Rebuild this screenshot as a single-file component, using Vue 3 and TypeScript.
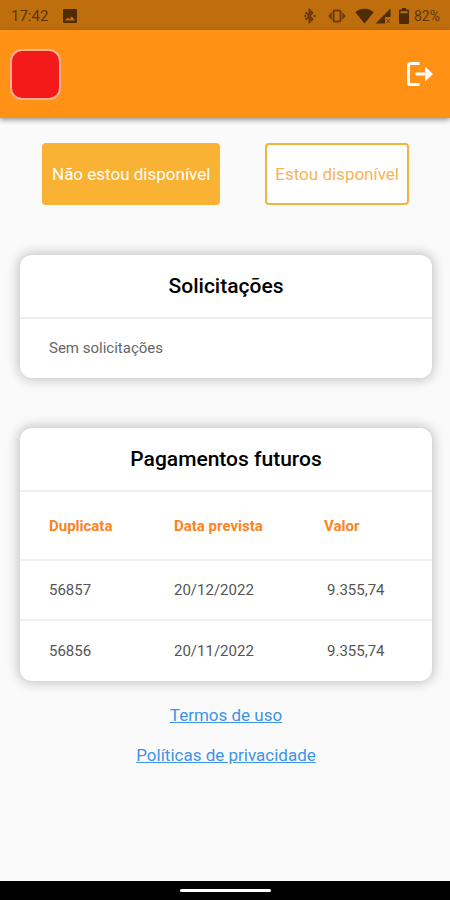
<script setup lang="ts">
import { ref } from 'vue'

interface Payment {
  id: string
  date: string
  value: string
}

const available = ref<boolean>(false)

const payments: Payment[] = [
  { id: '56857', date: '20/12/2022', value: '9.355,74' },
  { id: '56856', date: '20/11/2022', value: '9.355,74' },
]
</script>

<template>
  <div class="screen">
    <div class="status">
      <span class="time">17:42</span>
      <svg class="photo" width="16" height="16" viewBox="0 0 16 16" aria-hidden="true">
        <path fill-rule="evenodd" d="M2 1h12a1 1 0 0 1 1 1v12a1 1 0 0 1-1 1H2a1 1 0 0 1-1-1V2a1 1 0 0 1 1-1zM3 12.500h10L9.800 8.300 7.400 11.300 5.700 9.300z" />
      </svg>
      <div class="indicators">
        <svg class="bluetooth" width="12" height="18" viewBox="0 0 12 18" aria-hidden="true">
          <path class="line" d="M1.500 5.300l7 6.700L5.500 15V3l3 3-7 6.700" />
          <circle cx="1.200" cy="9" r="1" />
          <circle cx="10.600" cy="9" r="1" />
        </svg>
        <svg class="vibrate" width="18" height="16" viewBox="0 0 18 16" aria-hidden="true">
          <rect class="line" x="5.500" y="2.500" width="7" height="11" rx="1.500" />
          <path d="M3.700 4v8L.3 8zM14.300 4v8l3.400-4z" />
        </svg>
        <svg class="wifi" width="19" height="16" viewBox="0 0 19 16" aria-hidden="true">
          <path d="M9.500 15.500L.3 4.200C5.500-.4 13.500-.4 18.700 4.200z" />
        </svg>
        <svg class="signal" width="16" height="16" viewBox="0 0 16 16" aria-hidden="true">
          <path d="M15.500.5V9H10v6.500H.5z" />
          <path class="line thin" d="M11.500 11l3.500 4M15 11l-3.500 4" />
        </svg>
        <svg class="battery" width="10" height="16" viewBox="0 0 10 16" aria-hidden="true">
          <path fill-rule="evenodd" d="M3 0h4v1.500h2a1 1 0 0 1 1 1V15a1 1 0 0 1-1 1H1a1 1 0 0 1-1-1V2.500a1 1 0 0 1 1-1h2zM1.500 3.300v2h7v-2z" />
        </svg>
        <span class="percent">82%</span>
      </div>
    </div>

    <header class="topbar">
      <button class="avatar" type="button" aria-label="Perfil"></button>
      <button class="logout" type="button" aria-label="Sair">
        <svg width="28" height="26" viewBox="0 0 28 26" aria-hidden="true">
          <path d="M13.500 2.500H4.500a2 2 0 0 0-2 2v17a2 2 0 0 0 2 2h9" />
          <path d="M9.500 13H24" />
          <path class="head" d="M19 5.500L27 13l-8 7.500v-4.500l2-3-2-3z" />
        </svg>
      </button>
    </header>

    <main class="content">
      <div class="choices">
        <button class="choice filled" type="button" :aria-pressed="!available" @click="available = false">
          Não estou disponível
        </button>
        <button class="choice outlined" type="button" :aria-pressed="available" @click="available = true">
          Estou disponível
        </button>
      </div>

      <section class="card">
        <h2>Solicitações</h2>
        <p class="empty">Sem solicitações</p>
      </section>

      <section class="card">
        <h2>Pagamentos futuros</h2>
        <table>
          <thead>
            <tr>
              <th class="id" scope="col">Duplicata</th>
              <th class="date" scope="col">Data prevista</th>
              <th scope="col">Valor</th>
            </tr>
          </thead>
          <tbody>
            <tr v-for="payment in payments" :key="payment.id">
              <td class="id">{{ payment.id }}</td>
              <td>{{ payment.date }}</td>
              <td class="value">{{ payment.value }}</td>
            </tr>
          </tbody>
        </table>
      </section>

      <nav class="links">
        <a href="#termos">Termos de uso</a>
        <a href="#privacidade">Políticas de privacidade</a>
      </nav>
    </main>

    <div class="navbar"><span class="handle"></span></div>
  </div>
</template>

<style>
body {
  margin: 0;
  background: #fafafa;
}
</style>

<style scoped>
.screen {
  display: flex;
  flex-direction: column;
  min-height: 100vh;
  background: #fafafa;
  color: #000;
  font-family: Roboto, "Liberation Sans", sans-serif;
}

.status {
  display: flex;
  align-items: center;
  height: 30px;
  padding: 1px 10px 0 11px;
  box-sizing: border-box;
  background: #bf6e0e;
  color: #5e3507;
  font-size: 15px;
}

.status svg {
  fill: #4f2c05;
}

.status .line {
  fill: none;
  stroke: #6b3c08;
  stroke-width: 2;
}

.status .thin {
  stroke-width: 1;
}

.status .vibrate {
  fill: #6b3c08;
}

.photo {
  margin-left: 14px;
}

.indicators {
  display: flex;
  align-items: center;
  margin-left: auto;
}

.vibrate {
  margin-left: 12px;
}

.wifi {
  margin-left: 9px;
}

.signal {
  margin-left: 1px;
}

.battery {
  margin-left: 8px;
}

.percent {
  margin-left: 5px;
  font-size: 14px;
}

.topbar {
  display: flex;
  align-items: center;
  justify-content: space-between;
  height: 88px;
  padding: 0 16px 0 10px;
  box-sizing: border-box;
  background: #ff9214;
  box-shadow: 0 2px 5px rgba(0, 0, 0, 0.4);
}

.avatar {
  width: 51px;
  height: 51px;
  padding: 0;
  border: 2px solid #ffb092;
  border-radius: 12px;
  background: #f41a1a;
}

.logout {
  display: flex;
  padding: 0;
  border: 0;
  background: none;
}

.logout svg {
  fill: none;
  stroke: #fff;
  stroke-width: 3;
}

.logout .head {
  fill: #fff;
  stroke: none;
}

.content {
  flex: 1;
  padding: 25px 18px 0 20px;
}

.choices {
  display: flex;
  justify-content: space-between;
  padding: 0 23px 0 22px;
}

.choice {
  height: 62px;
  padding: 0 8px;
  border: 2px solid #f2b33c;
  border-radius: 4px;
  font-family: inherit;
  font-size: 17px;
}

.filled {
  border-color: #f9b233;
  background: #f9b233;
  color: #fff;
}

.outlined {
  background: #fff;
  color: #f5b455;
}

.card {
  margin-top: 50px;
  border-radius: 12px;
  background: #fff;
  box-shadow: 0 0 12px 2px rgba(0, 0, 0, 0.22);
}

h2 {
  margin: 0;
  padding: 0 16px;
  border-bottom: 2px solid #eee;
  font-size: 21px;
  font-weight: 500;
  line-height: 62px;
  text-align: center;
}

.empty {
  margin: 0;
  padding: 0 29px;
  color: #666;
  font-size: 15px;
  line-height: 59px;
}

table {
  width: 100%;
  border-collapse: separate;
  border-spacing: 0;
  table-layout: fixed;
}

th,
td {
  padding: 0;
  font-size: 15px;
  text-align: left;
}

th {
  height: 67px;
  border-bottom: 2px solid #f0f0f0;
  color: #fb8423;
  font-weight: 700;
}

td {
  height: 60px;
  box-sizing: border-box;
  color: #555;
}

tr:not(:last-child) td {
  border-bottom: 2px solid #f0f0f0;
}

.id {
  padding-left: 29px;
}

th.id {
  width: 125px;
}

th.date {
  width: 150px;
}

.value {
  padding-left: 3px;
}

.links {
  display: flex;
  flex-direction: column;
  align-items: center;
  gap: 20px;
  padding: 24px 0;
}

.links a {
  color: #3d94e6;
  font-size: 17px;
  line-height: 20px;
}

.navbar {
  display: flex;
  align-items: center;
  justify-content: center;
  height: 19px;
  background: #000;
}

.handle {
  width: 91px;
  height: 3px;
  border-radius: 2px;
  background: #fff;
}
</style>
